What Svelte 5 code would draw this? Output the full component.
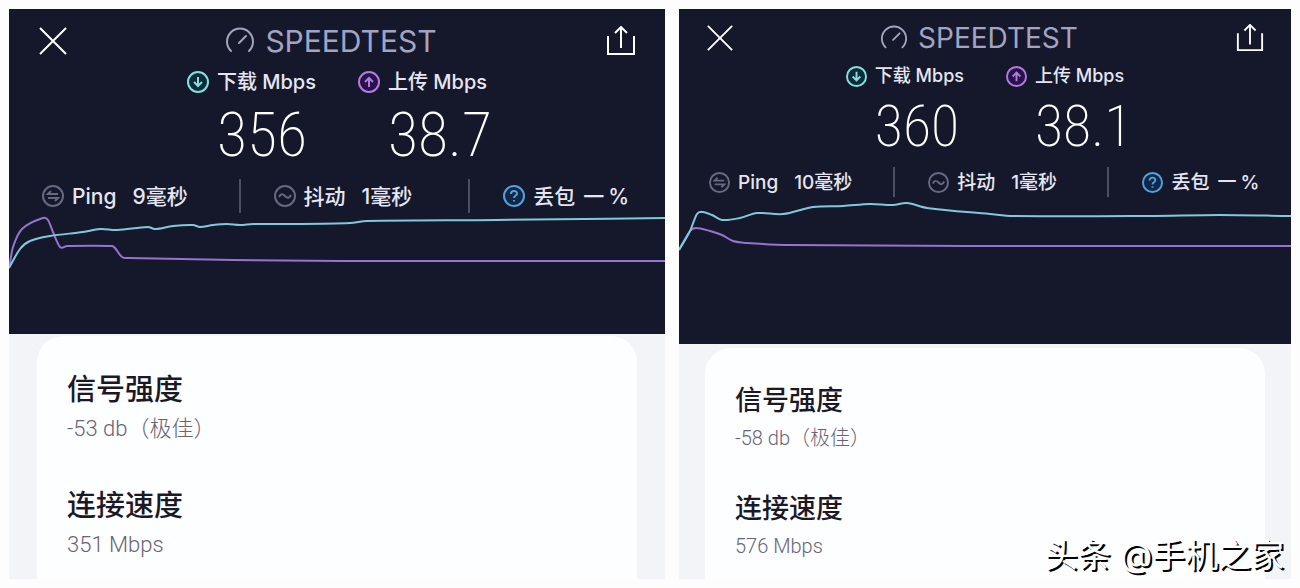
<script lang="ts">
  type Point = [number, number]

  interface Result {
    name: string
    compact: boolean
    download: string
    upload: string
    ping: string
    jitter: string
    signal: string
    link: string
    width: number
    height: number
    down: Point[]
    up: Point[]
  }

  const results: Result[] = [
    {
      name: 'first',
      compact: false,
      download: '356',
      upload: '38.7',
      ping: '9',
      jitter: '1',
      signal: '-53 db（极佳）',
      link: '351 Mbps',
      width: 656,
      height: 121,
      down: [
        [0, 55], [11, 36], [21, 28], [41, 23], [74, 19], [91, 16], [108, 17], [139, 14], [146, 16],
        [164, 13], [184, 12], [191, 14], [204, 12], [218, 11], [231, 12], [244, 11], [278, 11],
        [341, 10], [358, 8], [488, 7], [656, 5]
      ],
      up: [
        [0, 55], [4, 34], [13, 16], [34, 5], [39, 7], [44, 19], [51, 34], [58, 33], [103, 33],
        [106, 35], [113, 44], [120, 45], [224, 47], [331, 48], [656, 48]
      ]
    },
    {
      name: 'second',
      compact: true,
      download: '360',
      upload: '38.1',
      ping: '10',
      jitter: '1',
      signal: '-58 db（极佳）',
      link: '576 Mbps',
      width: 612,
      height: 147,
      down: [
        [0, 53], [11, 34], [18, 17], [24, 15], [33, 18], [43, 23], [61, 21], [78, 16], [104, 17],
        [134, 10], [164, 9], [191, 7], [214, 8], [228, 6], [248, 11], [311, 17], [334, 19],
        [470, 19], [540, 18], [612, 19]
      ],
      up: [
        [0, 53], [11, 34], [17, 31], [31, 34], [43, 38], [54, 44], [68, 46], [111, 48], [300, 49],
        [612, 49]
      ]
    }
  ]

  // Catmull-Rom through the samples, written out as cubic segments
  function curve(pts: Point[]): string {
    let d = `M${pts[0][0]} ${pts[0][1]}`
    for (let i = 0; i < pts.length - 1; i++) {
      const a = pts[i - 1] ?? pts[i]
      const b = pts[i]
      const c = pts[i + 1]
      const e = pts[i + 2] ?? c
      const span = (c[0] - b[0]) / 3
      const s1 = c[0] - a[0] ? (c[1] - a[1]) / (c[0] - a[0]) : 0
      const s2 = e[0] - b[0] ? (e[1] - b[1]) / (e[0] - b[0]) : 0
      d += `C${b[0] + span} ${b[1] + s1 * span} ${c[0] - span} ${c[1] - s2 * span} ${c[0]} ${c[1]}`
    }
    return d
  }
</script>

<main class="board">
  {#each results as r (r.name)}
    <section class="phone" class:compact={r.compact}>
      <div class="dark">
        <header class="head">
          <button type="button" aria-label="关闭">
            <svg class="action" viewBox="0 0 30 30"><path d="M2 2L28 28M28 2L2 28" /></svg>
          </button>
          <div class="brand">
            <svg class="gauge" viewBox="0 0 30 30">
              <path d="M6 25A13 13 0 1 1 24 25" />
              <path d="M14 17L21 10" />
            </svg>
            <span>SPEEDTEST</span>
          </div>
          <button type="button" aria-label="分享">
            <svg class="action" viewBox="0 0 30 30">
              <path d="M2 10V28H28V10M15 22V2M9 7L15 1L21 7" />
            </svg>
          </button>
        </header>

        <div class="speeds">
          <div class="speed">
            <svg class="ring down" viewBox="0 0 22 22">
              <circle cx="11" cy="11" r="10" />
              <path d="M11 6V15M7 11L11 15L15 11" />
            </svg>
            <span class="label">下载 Mbps</span>
            <span class="value">{r.download}</span>
          </div>
          <div class="speed">
            <svg class="ring up" viewBox="0 0 22 22">
              <circle cx="11" cy="11" r="10" />
              <path d="M11 16V7M7 11L11 7L15 11" />
            </svg>
            <span class="label">上传 Mbps</span>
            <span class="value">{r.upload}</span>
          </div>
        </div>

        <div class="stats">
          <div class="stat">
            <svg class="ring" viewBox="0 0 22 22">
              <circle cx="11" cy="11" r="10" />
              <path d="M16 9H6L9 6M6 13H16L13 16" />
            </svg>
            <span>Ping</span>
            <span class="num">{r.ping}毫秒</span>
          </div>
          <div class="stat">
            <svg class="ring" viewBox="0 0 22 22">
              <circle cx="11" cy="11" r="10" />
              <path d="M5 12C7 8 9 9 11 11S15 14 17 10" />
            </svg>
            <span>抖动</span>
            <span class="num">{r.jitter}毫秒</span>
          </div>
          <div class="stat">
            <svg class="ring help" viewBox="0 0 22 22">
              <circle cx="11" cy="11" r="10" />
              <path d="M8 9C8 5 14 5 14 8.500C14 11 11 10.500 11 13M11 15V16.500" />
            </svg>
            <span>丢包</span>
            <span class="loss">一<span>%</span></span>
          </div>
        </div>

        <svg class="chart" viewBox="0 0 {r.width} {r.height}" preserveAspectRatio="none">
          <path class="line-up" d={curve(r.up)} />
          <path class="line-down" d={curve(r.down)} />
        </svg>
      </div>

      <div class="sheet">
        <dl class="card">
          <dt>信号强度</dt>
          <dd>{r.signal}</dd>
          <dt>连接速度</dt>
          <dd>{r.link}</dd>
        </dl>
      </div>
    </section>
  {/each}
  <p class="credit">头条 @手机之家</p>
</main>

<style>
  :global(body) {
    background: #fdfdfe;
  }

  .board {
    position: relative;
    display: grid;
    grid-template-columns: 656fr 612fr;
    gap: 14px;
    padding: 9px 9px 10px;
    font-family: Inter, 'Noto Sans CJK SC', sans-serif;
  }

  .phone {
    --head: 64px;
    --icon: 30px;
    --brand: 30px;
    --ring: 22px;
    --label: 20px;
    --stat: 21px;
    --value: 62px;
    --value-row: 88px;
    --stat-row: 34px;
    --stat-first: 31px;
    --chart: 121px;
    --side: 29px;
    --title: 29px;
    --title-row: 46px;
    --sub: 22px;
    --sub-row: 32px;
    --space: 38px;
    --sheet-side: 28px;
    --card-top: 2px;
    --card-pad: 31px;
    display: flex;
    flex-direction: column;
    min-width: 0;
  }

  .compact {
    --head: 58px;
    --icon: 28px;
    --brand: 28px;
    --ring: 21px;
    --label: 18px;
    --stat: 19px;
    --value: 58px;
    --value-row: 82px;
    --stat-row: 30px;
    --stat-first: 28px;
    --chart: 147px;
    --side: 27px;
    --title: 27px;
    --title-row: 42px;
    --sub: 20px;
    --sub-row: 32px;
    --space: 34px;
    --sheet-side: 26px;
    --card-top: 4px;
    --card-pad: 32px;
  }

  .dark {
    background: #15182b;
    color: #e6e6f2;
  }

  svg {
    display: block;
    flex: none;
    fill: none;
    stroke: currentColor;
  }

  .head {
    display: flex;
    align-items: center;
    justify-content: space-between;
    height: var(--head);
    padding: 0 var(--side);
  }

  button {
    padding: 0;
    border: 0;
    background: none;
    color: #fff;
    cursor: pointer;
  }

  .action {
    width: var(--icon);
    height: var(--icon);
    stroke-width: 2;
  }

  .brand {
    display: flex;
    align-items: center;
    gap: 10px;
    padding-right: 12px;
    color: #a3a4c2;
    font-size: var(--brand);
    line-height: 1;
  }

  .gauge {
    width: var(--icon);
    height: var(--icon);
    stroke-width: 2;
    stroke-linecap: round;
  }

  .speeds {
    display: flex;
    justify-content: center;
    gap: 42px;
  }

  .speed {
    display: grid;
    grid-template-columns: var(--ring) auto;
    grid-template-rows: 18px var(--value-row);
    column-gap: 8px;
    align-items: center;
  }

  .label {
    font-size: var(--label);
    font-weight: 500;
    line-height: 18px;
    white-space: nowrap;
  }

  .value {
    grid-column: 2;
    width: 0;
    color: #fff;
    font-family: 'Roboto Condensed', Roboto, sans-serif;
    font-size: var(--value);
    font-weight: 200;
    line-height: 1;
  }

  .ring {
    width: var(--ring);
    height: var(--ring);
    color: #666981;
    stroke-width: 2;
  }

  .down {
    color: #86dfe0;
  }

  .down circle {
    fill: #0f2a38;
  }

  .up {
    color: #b07ddb;
  }

  .up circle {
    fill: #28124c;
  }

  .help {
    color: #56a0dc;
  }

  .help circle {
    fill: #102748;
  }

  .stats {
    display: grid;
    grid-template-columns: 35fr 35fr 30fr;
    height: var(--stat-row);
  }

  .stat {
    display: flex;
    align-items: center;
    gap: 8px;
    min-width: 0;
    padding-left: 33px;
    border-left: 2px solid #4c4e62;
    font-size: var(--stat);
    font-weight: 500;
    line-height: 1;
    white-space: nowrap;
  }

  .stat:first-child {
    padding-left: var(--stat-first);
    border-left-color: transparent;
  }

  .num {
    margin-left: 8px;
  }

  .loss {
    display: flex;
    gap: 4px;
  }

  .chart {
    width: 100%;
    height: var(--chart);
    stroke-width: 2;
  }

  .line-up {
    stroke: #9673cf;
  }

  .line-down {
    stroke: #83c8da;
  }

  .sheet {
    flex: 1;
    display: flex;
    padding: var(--card-top) var(--sheet-side) 0;
    background: #f3f4f7;
  }

  .card {
    flex: 1;
    margin: 0;
    padding: var(--card-pad) 30px 17px;
    border-radius: 26px 26px 0 0;
    background: #fdfeff;
  }

  dt {
    color: #1b1926;
    font-size: var(--title);
    font-weight: 500;
    line-height: var(--title-row);
  }

  dd {
    margin: 0;
    color: #686473;
    font-family: Roboto, 'Noto Sans CJK SC', sans-serif;
    font-size: var(--sub);
    font-weight: 300;
    line-height: var(--sub-row);
  }

  dd + dt {
    margin-top: var(--space);
  }

  .credit {
    position: absolute;
    right: 16px;
    bottom: 14px;
    margin: 0;
    color: #fff;
    font-size: 33px;
    line-height: 40px;
    text-shadow: 2px 2px 0 #000;
  }
</style>
